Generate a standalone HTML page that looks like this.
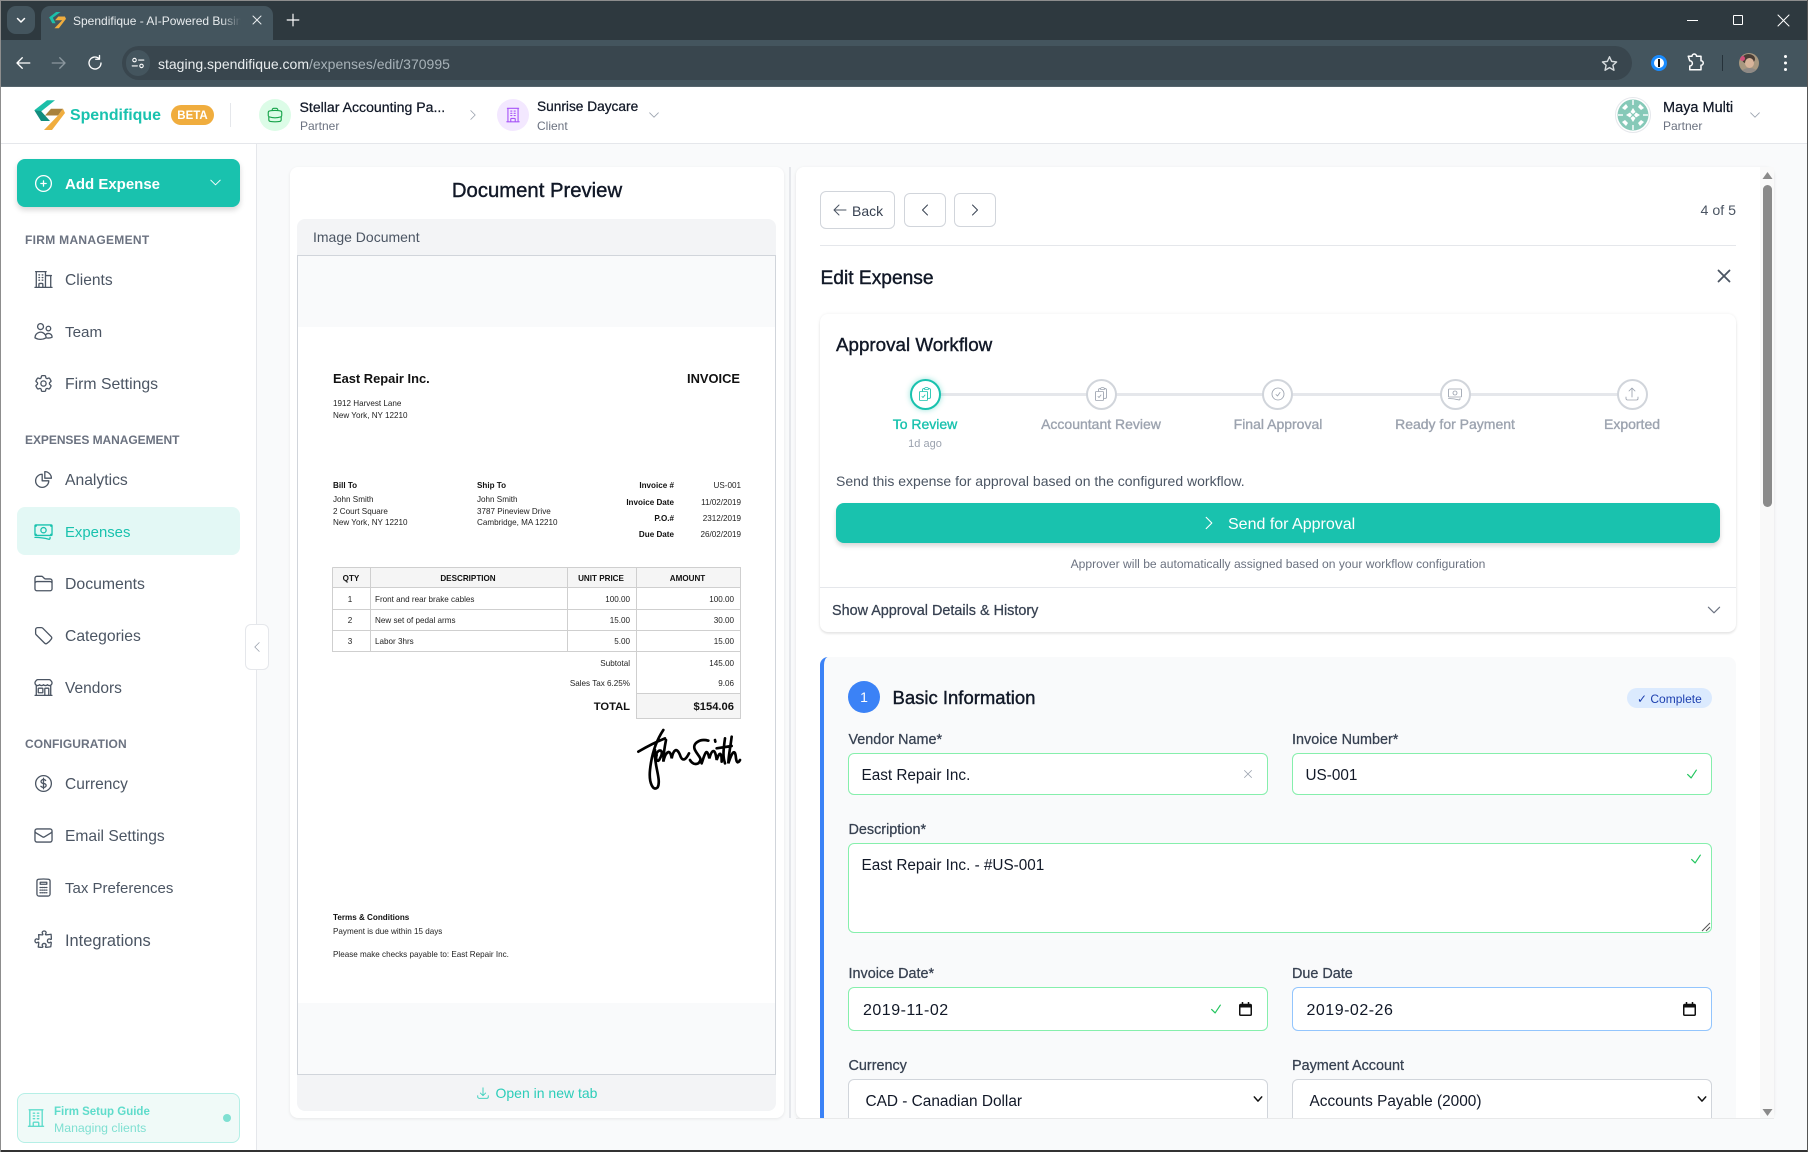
<!DOCTYPE html>
<html lang="en"><head><meta charset="utf-8"><title>Spendifique</title>
<style>
*{box-sizing:border-box}
html,body{margin:0;padding:0;width:1808px;height:1152px;overflow:hidden;background:#f9fafb}
body{font-family:"Liberation Sans",sans-serif;color:#374151;position:relative}
.a{position:absolute}
.t{position:absolute;white-space:nowrap;line-height:0;height:0}
.c{transform:translateX(-50%)}
.m{-webkit-text-stroke:.25px currentColor}
svg{position:absolute;overflow:visible}
svg.i{fill:none;stroke:currentColor;stroke-width:1.5;stroke-linecap:round;stroke-linejoin:round}
.nav{font-size:15.6px;color:#4b5563;left:65px}
.lab{font-size:12px;font-weight:bold;color:#6b7280;left:25px}
.ni{left:32.5px;width:21px;height:21px;color:#4b5563}
.inv{font-size:8.1px;color:#222}
.invb{font-size:8.1px;color:#111;font-weight:bold}
.fl{font-size:14.4px;color:#374151}
.val{font-size:15.3px;color:#111827}
.box{position:absolute;background:#fff;border:1px solid #86efac;border-radius:6px}
.circ{position:absolute;width:31px;height:31px;border-radius:50%;background:#fff;border:2px solid #d1d5db;top:378.5px}
</style></head><body>

<!-- Chrome -->
<div class="a" style="left:0;top:0;width:1808px;height:87px;background:#2e393f;border-top:1px solid #8d8d8d"></div>
<div class="a" style="left:0;top:40px;width:1808px;height:47px;background:#44555e;border-bottom:1px solid #56656d"></div>
<div class="a" style="left:41px;top:6px;width:232px;height:36px;background:#44555e;border-radius:9px 9px 0 0"></div>
<div class="a" style="left:7px;top:6px;width:28px;height:28px;background:#44555e;border-radius:9px"></div>
<svg class="i" style="left:15px;top:14px;color:#fff;stroke-width:3" width="12" height="12" viewBox="0 0 24 24"><path d="M5 9l7 7 7-7"/></svg>
<svg style="left:49px;top:11px" width="17" height="18" viewBox="34 100 31 30"><polygon fill="#1cbfa9" points="34.3,110.3 47,100.3 55,100.3 41,111 46,121 40,121"/><polygon fill="#f0ad3e" points="63,108.7 51,108.7 45,115.5 58,115.5 44,130 52,130 65,113"/></svg>
<div class="t" style="left:73px;top:21px;font-size:12px;color:#e8ecee;width:168px;overflow:hidden;height:16px;margin-top:-8px;line-height:16px;-webkit-mask-image:linear-gradient(90deg,#000 88%,transparent)">Spendifique - AI-Powered Busin</div>
<svg class="i" style="left:251px;top:14px;color:#e8ecee;stroke-width:2" width="12" height="12" viewBox="0 0 24 24"><path d="M4 4l16 16M20 4L4 20"/></svg>
<svg class="i" style="left:286px;top:13px;color:#fff;stroke-width:2" width="14" height="14" viewBox="0 0 24 24"><path d="M12 2v20M2 12h20"/></svg>
<svg class="i" style="left:14px;top:54px;color:#fff;stroke-width:1.8" width="18" height="18" viewBox="0 0 24 24"><path d="M11 5l-7 7 7 7M4 12h17"/></svg>
<svg class="i" style="left:50px;top:54px;color:#8c989f;stroke-width:1.8" width="18" height="18" viewBox="0 0 24 24"><path d="M13 5l7 7-7 7M20 12H3"/></svg>
<svg class="i" style="left:86px;top:54px;color:#fff;stroke-width:1.8" width="18" height="18" viewBox="0 0 24 24"><path d="M20 12a8 8 0 1 1-2.5-5.8M18 2v5h-5"/></svg>
<div class="a" style="left:122px;top:46px;width:1510px;height:34px;background:#39464e;border-radius:17px"></div>
<div class="a" style="left:126px;top:50px;width:24px;height:26px;background:#44555e;border-radius:13px"></div>
<svg class="i" style="left:131px;top:56px;color:#fff;stroke-width:1.8" width="14" height="14" viewBox="0 0 24 24"><circle cx="6" cy="7" r="3"/><path d="M13 7h9M2 17h9"/><circle cx="18" cy="17" r="3"/></svg>
<div class="t" style="left:158px;top:64px;font-size:14px;color:#e9edef">staging.spendifique.com<span style="color:#a7b2b8">/expenses/edit/370995</span></div>
<svg style="left:1601px;top:55px" width="17" height="17" viewBox="0 0 24 24" fill="none" stroke="#d6dbdd" stroke-width="2" stroke-linejoin="round"><path d="M12 2.5l3 6.5 7 .8-5.2 4.7 1.5 7L12 17.8 5.7 21.5l1.5-7L2 9.8l7-.8z"/></svg>
<div class="a" style="left:1651px;top:55px;width:16px;height:16px;border-radius:50%;background:#fff;border:3px solid #1a8cff"></div>
<div class="a" style="left:1658px;top:59px;width:2px;height:8px;background:#111"></div>
<svg class="i" style="left:1686px;top:54px;color:#fff;stroke-width:2" width="18" height="18" viewBox="0 0 24 24"><path d="M3 3h5a3 3 0 0 1 6 0h6v6a3 3 0 0 1 0 6v6H5v-5a3 3 0 0 0 0-7z"/></svg>
<div class="a" style="left:1722px;top:55px;width:1px;height:16px;background:#26323a"></div>
<div class="a" style="left:1739px;top:53px;width:20px;height:20px;border-radius:50%;background:#a89880;overflow:hidden"><div class="a" style="left:3px;top:1px;width:13px;height:10px;border-radius:50%;background:#4a3d35"></div><div class="a" style="left:6px;top:5px;width:9px;height:10px;border-radius:50%;background:#d8b49a"></div><div class="a" style="left:3px;top:15px;width:15px;height:8px;border-radius:50%;background:#8f8a86"></div><div class="a" style="left:1px;top:3px;width:5px;height:5px;border-radius:50%;background:#d0507a"></div></div>
<div class="a" style="left:1784px;top:55px;width:3px;height:3px;border-radius:50%;background:#fff;box-shadow:0 6.5px 0 #fff,0 13px 0 #fff"></div>
<div class="a" style="left:1687px;top:19.5px;width:11px;height:1px;background:#fff"></div>
<div class="a" style="left:1733px;top:15px;width:10px;height:10px;border:1px solid #fff;border-radius:1px"></div>
<svg class="i" style="left:1778px;top:15px;color:#fff;stroke-width:1" width="11" height="11" viewBox="0 0 11 11"><path d="M0 0l11 11M11 0L0 11"/></svg>

<!-- Header -->
<div class="a" style="left:0;top:87px;width:1808px;height:57px;background:#fff;border-bottom:1px solid #e5e7eb"></div>
<svg style="left:34px;top:100px" width="31" height="30" viewBox="34 100 31 30"><polygon fill="#1cbfa9" points="34.3,110.3 47,100.3 55,100.3 41,111.500"/><polygon fill="#128d7e" points="34.3,110.3 41,111 50,121 41,121"/><polygon fill="#1cbfa9" points="43,110 50,115 47,118 39,110.500" opacity="0"/><polygon fill="#a9813c" points="63,108.7 51,108.7 45,115.5 58,115.5"/><polygon fill="#f0ad3e" points="63,108.7 65,113 52,130 44,130 58,115.5"/></svg>
<div class="t" style="left:70px;top:116px;font-size:15.9px;font-weight:bold;color:#19c2ae">Spendifique</div>
<div class="a" style="left:171px;top:105px;width:43px;height:20px;border-radius:10px;background:#f0ad3e"></div>
<div class="t c" style="left:192.5px;top:115.5px;font-size:11.5px;font-weight:bold;color:#fff">BETA</div>
<div class="a" style="left:230px;top:103px;width:1px;height:24px;background:#e5e7eb"></div>
<div class="a" style="left:259px;top:99px;width:32px;height:32px;border-radius:50%;background:#dcfce7"></div>
<svg class="i" style="left:266px;top:106px;color:#16a34a" width="18" height="18" viewBox="0 0 24 24"><path d="M20.25 14.15v4.25c0 1.094-.787 2.036-1.872 2.18-2.087.277-4.216.42-6.378.42s-4.291-.143-6.378-.42c-1.085-.144-1.872-1.086-1.872-2.18v-4.25m16.5 0a2.18 2.18 0 00.75-1.661V8.706c0-1.081-.768-2.015-1.837-2.175a48.114 48.114 0 00-3.413-.387m4.5 8.006c-.194.165-.42.295-.673.38A23.978 23.978 0 0112 15.75c-2.648 0-5.195-.429-7.577-1.22a2.016 2.016 0 01-.673-.38m0 0A2.18 2.18 0 013 12.489V8.706c0-1.081.768-2.015 1.837-2.175a48.111 48.111 0 013.413-.387m7.5 0V5.25A2.25 2.25 0 0013.5 3h-3a2.25 2.25 0 00-2.25 2.25v.894m7.5 0a48.667 48.667 0 00-7.5 0"/></svg>
<div class="t m" style="left:299.5px;top:107px;font-size:14.1px;color:#111827">Stellar Accounting Pa...</div>
<div class="t" style="left:300px;top:126px;font-size:12px;color:#6b7280">Partner</div>
<svg class="i" style="left:466px;top:108px;color:#9ca3af" width="14" height="14" viewBox="0 0 24 24"><path d="M8.25 4.5l7.5 7.5-7.5 7.5"/></svg>
<div class="a" style="left:497px;top:99px;width:32px;height:32px;border-radius:50%;background:#f3e8ff"></div>
<svg class="i" style="left:504px;top:106px;color:#a855f7" width="18" height="18" viewBox="0 0 24 24"><path d="M3.75 21h16.5M4.5 3h15M5.25 3v18m13.5-18v18M9 6.75h1.5m-1.5 3h1.5m-1.5 3h1.5m3-6H15m-1.5 3H15m-1.5 3H15M9 21v-3.375c0-.621.504-1.125 1.125-1.125h3.75c.621 0 1.125.504 1.125 1.125V21"/></svg>
<div class="t m" style="left:537px;top:107px;font-size:13.7px;color:#111827">Sunrise Daycare</div>
<div class="t" style="left:537px;top:126px;font-size:12px;color:#6b7280">Client</div>
<svg class="i" style="left:647px;top:108px;color:#9ca3af" width="14" height="14" viewBox="0 0 24 24"><path d="M19.5 8.25l-7.5 7.5-7.5-7.5"/></svg>
<div class="a" style="left:1615px;top:97px;width:36px;height:36px;border-radius:50%;background:#fff;border:1.5px solid #e5e7eb"></div>
<svg style="left:1617px;top:99px" width="32" height="32" viewBox="0 0 32 32" fill="#86c9b8"><circle cx="16" cy="16" r="15.5"/><g fill="#fff"><polygon points="16,9 18.5,13 16,15 13.5,13"/><polygon points="16,17 18.5,19 16,23 13.5,19"/><polygon points="9,16 13,13.5 15,16 13,18.5"/><polygon points="17,16 19,13.5 23,16 19,18.5"/><polygon points="5,9 9,5 11,8 8,11"/><polygon points="27,9 23,5 21,8 24,11"/><polygon points="5,23 9,27 11,24 8,21"/><polygon points="27,23 23,27 21,24 24,21"/><rect x="15.3" y="1" width="1.4" height="5"/><rect x="15.3" y="26" width="1.4" height="5"/><rect x="1" y="15.3" width="5" height="1.4"/><rect x="26" y="15.3" width="5" height="1.4"/></g></svg>
<div class="t m" style="left:1663px;top:108px;font-size:14.5px;color:#111827">Maya Multi</div>
<div class="t" style="left:1663px;top:126px;font-size:12px;color:#6b7280">Partner</div>
<svg class="i" style="left:1748px;top:108px;color:#9ca3af" width="14" height="14" viewBox="0 0 24 24"><path d="M19.5 8.25l-7.5 7.5-7.5-7.5"/></svg>

<!-- Sidebar -->
<div class="a" style="left:0;top:144px;width:257px;height:1008px;background:#fff;border-right:1px solid #e5e7eb"></div>
<div class="a" style="left:17px;top:159px;width:223px;height:48px;background:#19c2ae;border-radius:8px;box-shadow:0 3px 6px rgba(0,0,0,.16)"></div>
<svg class="i" style="left:32.5px;top:172.5px;color:#fff" width="21" height="21" viewBox="0 0 24 24"><path d="M12 9v6m3-3H9m12 0a9 9 0 11-18 0 9 9 0 0118 0z"/></svg>
<div class="t" style="left:65px;top:184.5px;font-size:15px;font-weight:bold;color:#fff">Add Expense</div>
<svg class="i" style="left:208px;top:175px;color:#fff" width="15" height="15" viewBox="0 0 24 24"><path d="M19.5 8.25l-7.5 7.5-7.5-7.5"/></svg>

<div class="t lab" style="top:240px;letter-spacing:.3px">FIRM MANAGEMENT</div>
<svg class="i ni" style="top:268.5px" viewBox="0 0 24 24"><path d="M2.25 21h19.5m-18-18v18m10.5-18v18m6-13.5V21M6.75 6.75h.75m-.75 3h.75m-.75 3h.75m3-6h.75m-.75 3h.75m-.75 3h.75M6.75 21v-3.375c0-.621.504-1.125 1.125-1.125h2.25c.621 0 1.125.504 1.125 1.125V21M3 3h12m-.75 4.5H21"/></svg>
<div class="t nav" style="top:281px;font-size:15.6px">Clients</div>
<svg class="i ni" style="top:320.5px" viewBox="0 0 24 24"><path d="M15 19.128a9.38 9.38 0 002.625.372 9.337 9.337 0 004.121-.952 4.125 4.125 0 00-7.533-2.493M15 19.128v-.003c0-1.113-.285-2.16-.786-3.07M15 19.128v.106A12.318 12.318 0 018.624 21c-2.331 0-4.512-.645-6.374-1.766l-.001-.109a6.375 6.375 0 0111.964-3.07M12 6.375a3.375 3.375 0 11-6.75 0 3.375 3.375 0 016.75 0zm8.25 2.25a2.625 2.625 0 11-5.25 0 2.625 2.625 0 015.25 0z"/></svg>
<div class="t nav" style="top:332.5px;font-size:15.2px">Team</div>
<svg class="i ni" style="top:372.5px" viewBox="0 0 24 24"><path d="M9.594 3.94c.09-.542.56-.94 1.11-.94h2.593c.55 0 1.02.398 1.11.94l.213 1.281c.063.374.313.686.645.87.074.04.147.083.22.127.324.196.72.257 1.075.124l1.217-.456a1.125 1.125 0 011.37.49l1.296 2.247a1.125 1.125 0 01-.26 1.431l-1.003.827c-.293.24-.438.613-.431.992a6.759 6.759 0 010 .255c-.007.378.138.75.43.99l1.005.828c.424.35.534.954.26 1.43l-1.298 2.247a1.125 1.125 0 01-1.369.491l-1.217-.456c-.355-.133-.75-.072-1.076.124a6.57 6.57 0 01-.22.128c-.331.183-.581.495-.644.869l-.213 1.28c-.09.543-.56.941-1.11.941h-2.594c-.55 0-1.02-.398-1.11-.94l-.213-1.281c-.062-.374-.312-.686-.644-.87a6.52 6.52 0 01-.22-.127c-.325-.196-.72-.257-1.076-.124l-1.217.456a1.125 1.125 0 01-1.369-.49l-1.297-2.247a1.125 1.125 0 01.26-1.431l1.004-.827c.292-.24.437-.613.43-.992a6.932 6.932 0 010-.255c.007-.378-.138-.75-.43-.99l-1.004-.828a1.125 1.125 0 01-.26-1.43l1.297-2.247a1.125 1.125 0 011.37-.491l1.216.456c.356.133.751.072 1.076-.124.072-.044.146-.087.22-.128.332-.183.582-.495.644-.869l.214-1.281z"/><path d="M15 12a3 3 0 11-6 0 3 3 0 016 0z"/></svg>
<div class="t nav" style="top:385px;font-size:15.8px">Firm Settings</div>

<div class="t lab" style="top:439.5px;letter-spacing:-.05px">EXPENSES MANAGEMENT</div>
<svg class="i ni" style="top:468.5px" viewBox="0 0 24 24"><path d="M10.5 6a7.5 7.5 0 107.5 7.5h-7.5V6z"/><path d="M13.5 10.5H21A7.5 7.5 0 0013.5 3v7.5z"/></svg>
<div class="t nav" style="top:481px;font-size:15.7px">Analytics</div>
<div class="a" style="left:17px;top:507px;width:223px;height:48px;background:#e3f8f5;border-radius:8px"></div>
<svg class="i ni" style="top:520.5px;color:#19c2ae" viewBox="0 0 24 24"><path d="M2.25 18.75a60.07 60.07 0 0115.797 2.101c.727.198 1.453-.342 1.453-1.096V18.75M3.75 4.5v.75A.75.75 0 013 6h-.75m0 0v-.375c0-.621.504-1.125 1.125-1.125H20.25M2.25 6v9m18-10.5v.75c0 .414.336.75.75.75h.75m-1.5-1.5h.375c.621 0 1.125.504 1.125 1.125v9.75c0 .621-.504 1.125-1.125 1.125h-.375m1.5-1.5H21a.75.75 0 00-.75.75v.75m0 0H3.75m0 0h-.375a1.125 1.125 0 01-1.125-1.125V15m1.5 1.5v-.75A.75.75 0 003 15h-.75M15 10.5a3 3 0 11-6 0 3 3 0 016 0z"/></svg>
<div class="t nav" style="top:533px;color:#19c2ae;font-size:14.9px">Expenses</div>
<svg class="i ni" style="top:572.5px" viewBox="0 0 24 24"><path d="M2.25 12.75V12A2.25 2.25 0 014.5 9.75h15A2.25 2.25 0 0121.75 12v.75m-8.69-6.44l-2.12-2.12a1.5 1.5 0 00-1.061-.44H4.5A2.25 2.25 0 002.25 6v12a2.25 2.25 0 002.25 2.25h15A2.25 2.25 0 0021.75 18V9a2.25 2.25 0 00-2.25-2.25h-5.379a1.5 1.5 0 01-1.06-.44z"/></svg>
<div class="t nav" style="top:585px;font-size:15.8px">Documents</div>
<svg class="i ni" style="top:625px" viewBox="0 0 24 24"><path d="M9.568 3H5.25A2.25 2.25 0 003 5.25v4.318c0 .597.237 1.17.659 1.591l9.581 9.581c.699.699 1.78.872 2.607.33a18.095 18.095 0 005.223-5.223c.542-.827.369-1.908-.33-2.607L11.16 3.66A2.25 2.25 0 009.568 3z"/></svg>
<div class="t nav" style="top:637px;font-size:15.7px">Categories</div>
<svg class="i ni" style="top:677px" viewBox="0 0 24 24"><path d="M13.5 21v-7.5a.75.75 0 01.75-.75h3a.75.75 0 01.75.75V21m-4.5 0H2.36m11.14 0H18m0 0h3.64m-1.39 0V9.349m-16.5 11.65V9.35m0 0a3.001 3.001 0 003.75-.615A2.993 2.993 0 009.75 9.75c.896 0 1.7-.393 2.25-1.016a2.993 2.993 0 002.25 1.016c.896 0 1.7-.393 2.25-1.016a3.001 3.001 0 003.75.614m-16.5 0a3.004 3.004 0 01-.621-4.72L4.318 3.44A1.5 1.5 0 015.378 3h13.243a1.5 1.5 0 011.06.44l1.19 1.189a3 3 0 01-.621 4.72m-13.5 8.65h3.75a.75.75 0 00.75-.75V13.5a.75.75 0 00-.75-.75H6.75a.75.75 0 00-.75.75v3.75c0 .415.336.75.75.75z"/></svg>
<div class="t nav" style="top:689px;font-size:15.5px">Vendors</div>

<div class="t lab" style="top:743.5px;letter-spacing:.1px">CONFIGURATION</div>
<svg class="i ni" style="top:773px" viewBox="0 0 24 24"><path d="M12 6v12m-3-2.818l.879.659c1.171.879 3.07.879 4.242 0 1.172-.879 1.172-2.303 0-3.182C13.536 12.219 12.768 12 12 12c-.725 0-1.45-.22-2.003-.659-1.106-.879-1.106-2.303 0-3.182s2.9-.879 4.006 0l.415.33M21 12a9 9 0 11-18 0 9 9 0 0118 0z"/></svg>
<div class="t nav" style="top:785px;font-size:15.5px">Currency</div>
<svg class="i ni" style="top:824.5px" viewBox="0 0 24 24"><path d="M21.75 6.75v10.5a2.25 2.25 0 01-2.25 2.25h-15a2.25 2.25 0 01-2.25-2.25V6.75m19.5 0A2.25 2.25 0 0019.5 4.5h-15a2.25 2.25 0 00-2.25 2.25m19.5 0v.243a2.25 2.25 0 01-1.07 1.916l-7.5 4.615a2.25 2.25 0 01-2.36 0L3.32 8.91a2.25 2.25 0 01-1.07-1.916V6.75"/></svg>
<div class="t nav" style="top:837px;font-size:15.6px">Email Settings</div>
<svg class="i ni" style="top:876.5px" viewBox="0 0 24 24"><path d="M8.25 6h7.5v2.25h-7.5V6zM12 2.25c-1.892 0-3.758.11-5.593.322C5.307 2.7 4.5 3.65 4.5 4.757V19.5a2.25 2.25 0 002.25 2.25h10.5a2.25 2.25 0 002.25-2.25V4.757c0-1.108-.806-2.057-1.907-2.185A48.507 48.507 0 0012 2.25z"/><path stroke-dasharray="1 1.3" d="M8 12h8M8 15h8M8 18h8"/></svg>
<div class="t nav" style="top:888.5px;font-size:15px">Tax Preferences</div>
<svg class="i ni" style="top:928.5px" viewBox="0 0 24 24"><path d="M14.25 6.087c0-.355.186-.676.401-.959.221-.29.349-.634.349-1.003 0-1.036-1.007-1.875-2.25-1.875s-2.25.84-2.25 1.875c0 .369.128.713.349 1.003.215.283.401.604.401.959a.64.64 0 01-.657.643 48.39 48.39 0 01-4.163-.3c.186 1.613.293 3.25.315 4.907a.656.656 0 01-.658.663c-.355 0-.676-.186-.959-.401a1.647 1.647 0 00-1.003-.349c-1.036 0-1.875 1.007-1.875 2.25s.84 2.25 1.875 2.25c.369 0 .713-.128 1.003-.349.283-.215.604-.401.959-.401.31 0 .555.26.532.57a48.039 48.039 0 01-.642 5.056c1.518.19 3.058.309 4.616.354a.64.64 0 00.657-.643c0-.355-.186-.676-.401-.959a1.647 1.647 0 01-.349-1.003c0-1.035 1.008-1.875 2.25-1.875 1.243 0 2.25.84 2.25 1.875 0 .369-.128.713-.349 1.003-.215.283-.4.604-.4.959 0 .333.277.599.61.58a48.1 48.1 0 005.427-.63 48.05 48.05 0 00.582-4.717.532.532 0 00-.533-.57c-.355 0-.676.186-.959.401-.29.221-.634.349-1.003.349-1.035 0-1.875-1.007-1.875-2.25s.84-2.25 1.875-2.25c.37 0 .713.128 1.003.349.283.215.604.401.96.401a.656.656 0 00.658-.663 48.422 48.422 0 00-.37-5.36c-1.886.342-3.81.574-5.766.689a.578.578 0 01-.61-.58z"/></svg>
<div class="t nav" style="top:940.5px;font-size:16.4px">Integrations</div>

<div class="a" style="left:17px;top:1093px;width:223px;height:50px;background:#f0faf8;border:1px solid #b5efe6;border-radius:8px"></div>
<svg class="i" style="left:25px;top:1107px;color:#5fdccb" width="22" height="22" viewBox="0 0 24 24"><path d="M3.75 21h16.5M4.5 3h15M5.25 3v18m13.5-18v18M9 6.75h1.5m-1.5 3h1.5m-1.5 3h1.5m3-6H15m-1.5 3H15m-1.5 3H15M9 21v-3.375c0-.621.504-1.125 1.125-1.125h3.75c.621 0 1.125.504 1.125 1.125V21"/></svg>
<div class="t" style="left:54px;top:1112px;font-size:11.5px;font-weight:bold;color:#5fdccb">Firm Setup Guide</div>
<div class="t" style="left:54px;top:1127.5px;font-size:12.3px;color:#7fe0d2">Managing clients</div>
<div class="a" style="left:223px;top:1114px;width:8px;height:8px;border-radius:50%;background:#7fe0d2"></div>

<div class="a" style="left:245px;top:624px;width:24px;height:46px;background:#fff;border:1px solid #e5e7eb;border-radius:6px"></div>
<svg class="i" style="left:250px;top:640px;color:#9ca3af" width="14" height="14" viewBox="0 0 24 24"><path d="M15.75 19.5L8.25 12l7.5-7.5"/></svg>

<!-- Document panel -->
<div class="a" style="left:290px;top:167px;width:494px;height:951px;background:#fff;border-radius:8px;box-shadow:0 1px 3px rgba(0,0,0,.08)"></div>
<div class="t c" style="left:537px;top:191px;font-size:20.3px;color:#111827;-webkit-text-stroke:.4px #111827">Document Preview</div>
<div class="a" style="left:297px;top:219px;width:479px;height:37px;background:#f3f4f6;border-radius:8px 8px 0 0"></div>
<div class="t" style="left:313px;top:237px;font-size:14px;color:#4b5563">Image Document</div>
<div class="a" style="left:297px;top:255px;width:479px;height:820px;background:#f9fafb;border:1px solid #d1d5db"></div>
<div class="a" style="left:298px;top:327px;width:477px;height:676px;background:#fff"></div>
<div class="a" style="left:297px;top:1075px;width:479px;height:36px;background:#f3f4f6;border-radius:0 0 8px 8px"></div>
<svg class="i" style="left:476px;top:1086px;color:#2ccdb9" width="14" height="14" viewBox="0 0 24 24"><path d="M3 16.5v2.25A2.25 2.25 0 005.25 21h13.5A2.25 2.25 0 0021 18.75V16.5M16.5 12L12 16.5m0 0L7.5 12m4.5 4.5V3"/></svg>
<div class="t" style="left:495.5px;top:1093px;font-size:14px;color:#2ccdb9">Open in new tab</div>
<div class="a" style="left:789px;top:167px;width:1.5px;height:951px;background:#e5e7eb"></div>

<!-- Invoice -->
<div class="t" style="left:333px;top:379px;font-size:12.9px;font-weight:bold;color:#111">East Repair Inc.</div>
<div class="t" style="right:1068px;top:379px;font-size:12.9px;font-weight:bold;color:#111">INVOICE</div>
<div class="t inv" style="left:333px;top:404px">1912 Harvest Lane</div>
<div class="t inv" style="left:333px;top:416px">New York, NY 12210</div>
<div class="t invb" style="left:333px;top:486px">Bill To</div>
<div class="t inv" style="left:333px;top:500px">John Smith</div>
<div class="t inv" style="left:333px;top:511.5px">2 Court Square</div>
<div class="t inv" style="left:333px;top:523px">New York, NY 12210</div>
<div class="t invb" style="left:477px;top:486px">Ship To</div>
<div class="t inv" style="left:477px;top:500px">John Smith</div>
<div class="t inv" style="left:477px;top:511.5px">3787 Pineview Drive</div>
<div class="t inv" style="left:477px;top:523px">Cambridge, MA 12210</div>
<div class="t invb" style="right:1134px;top:486px">Invoice #</div>
<div class="t invb" style="right:1134px;top:502.5px">Invoice Date</div>
<div class="t invb" style="right:1134px;top:518.5px">P.O.#</div>
<div class="t invb" style="right:1134px;top:535px">Due Date</div>
<div class="t inv" style="right:1067px;top:486px">US-001</div>
<div class="t inv" style="right:1067px;top:502.5px">11/02/2019</div>
<div class="t inv" style="right:1067px;top:518.5px">2312/2019</div>
<div class="t inv" style="right:1067px;top:535px">26/02/2019</div>

<div class="a" style="left:332px;top:567px;width:409px;height:20px;background:#f5f5f5"></div>
<div class="a" style="left:636px;top:693px;width:105px;height:26px;background:#f5f5f5"></div>
<svg style="left:0;top:0" width="1808" height="1152" fill="none" stroke="#cfcfcf" stroke-width="1"><path d="M332.5 567.5H740.5V718.5H636.5V651.5M332.5 567.5V651.5H740.5M332.5 587.5H740.5M332.5 609.5H740.5M332.5 630.5H740.5M370.5 567.5V651.5M567.5 567.5V651.5M636.5 567.5V651.5M636.5 693.5H740.5"/></svg>
<div class="t invb c" style="left:351px;top:579px">QTY</div>
<div class="t invb c" style="left:468px;top:579px">DESCRIPTION</div>
<div class="t invb c" style="left:601px;top:579px">UNIT PRICE</div>
<div class="t invb c" style="left:687.5px;top:579px">AMOUNT</div>
<div class="t inv c" style="left:350px;top:600px">1</div>
<div class="t inv c" style="left:350px;top:621px">2</div>
<div class="t inv c" style="left:350px;top:642px">3</div>
<div class="t inv" style="left:375px;top:600px">Front and rear brake cables</div>
<div class="t inv" style="left:375px;top:621px">New set of pedal arms</div>
<div class="t inv" style="left:375px;top:642px">Labor 3hrs</div>
<div class="t inv" style="right:1178px;top:600px">100.00</div>
<div class="t inv" style="right:1178px;top:621px">15.00</div>
<div class="t inv" style="right:1178px;top:642px">5.00</div>
<div class="t inv" style="right:1178px;top:663.5px">Subtotal</div>
<div class="t inv" style="right:1178px;top:684px">Sales Tax 6.25%</div>
<div class="t" style="right:1178px;top:706.5px;font-size:11.2px;font-weight:bold;color:#111">TOTAL</div>
<div class="t inv" style="right:1074px;top:600px">100.00</div>
<div class="t inv" style="right:1074px;top:621px">30.00</div>
<div class="t inv" style="right:1074px;top:642px">15.00</div>
<div class="t inv" style="right:1074px;top:663.5px">145.00</div>
<div class="t inv" style="right:1074px;top:684px">9.06</div>
<div class="t" style="right:1074px;top:706.5px;font-size:11.2px;font-weight:bold;color:#111">$154.06</div>
<svg style="left:290px;top:550px" width="500" height="300" viewBox="0 0 1500 900" fill="none" stroke="#000" stroke-width="8" stroke-linecap="round"><path d="M1045 605C1070 590 1100 575 1125 565M1120 540C1100 570 1085 610 1080 660C1076 700 1090 725 1103 712C1115 690 1090 640 1095 600M1095 620C1105 590 1125 600 1110 625C1105 640 1095 630 1100 615M1128 570C1122 600 1120 620 1120 635C1125 610 1140 590 1145 625C1150 600 1160 590 1170 615C1178 640 1190 625 1197 610M1255 572C1230 565 1205 580 1215 600C1225 620 1240 625 1225 640C1215 645 1205 640 1200 630M1235 640C1245 610 1250 590 1258 625C1265 600 1275 590 1280 630C1290 600 1295 610 1295 635M1305 565C1300 600 1298 620 1305 640M1280 595L1325 588M1325 560C1320 600 1315 620 1315 640C1325 610 1335 590 1338 625C1340 640 1345 640 1350 630M1275 570L1276 575"/></svg>
<div class="t invb" style="left:333px;top:918px">Terms &amp; Conditions</div>
<div class="t inv" style="left:333px;top:932px">Payment is due within 15 days</div>
<div class="t inv" style="left:333px;top:955px">Please make checks payable to: East Repair Inc.</div>

<!-- Right panel -->
<div class="a" style="left:796px;top:167px;width:978px;height:952px;background:#fff;border-radius:8px;box-shadow:0 1px 3px rgba(0,0,0,.1)"></div>
<div class="a" style="left:1760px;top:167px;width:14px;height:952px;background:#f9f9f9"></div>
<div class="a" style="left:820px;top:191px;width:75px;height:38px;background:#fff;border:1px solid #d1d5db;border-radius:6px"></div>
<svg class="i" style="left:832px;top:202px;color:#4b5563" width="16" height="16" viewBox="0 0 24 24"><path d="M10.5 19.5L3 12m0 0l7.5-7.5M3 12h18"/></svg>
<div class="t" style="left:852px;top:210.5px;font-size:14px;color:#374151">Back</div>
<div class="a" style="left:904px;top:193px;width:42px;height:34px;background:#fff;border:1px solid #d1d5db;border-radius:6px"></div>
<svg class="i" style="left:917px;top:202px;color:#374151" width="16" height="16" viewBox="0 0 24 24"><path d="M15.75 19.5L8.25 12l7.5-7.5"/></svg>
<div class="a" style="left:954px;top:193px;width:42px;height:34px;background:#fff;border:1px solid #d1d5db;border-radius:6px"></div>
<svg class="i" style="left:967px;top:202px;color:#374151" width="16" height="16" viewBox="0 0 24 24"><path d="M8.25 4.5l7.5 7.5-7.5 7.5"/></svg>
<div class="t" style="right:72px;top:210.5px;font-size:14.2px;color:#4b5563">4 of 5</div>
<div class="a" style="left:820px;top:245px;width:916px;height:1px;background:#e5e7eb"></div>
<div class="t" style="left:820.5px;top:279px;font-size:19.2px;color:#111827;-webkit-text-stroke:.4px #111827">Edit Expense</div>
<svg class="i" style="left:1713px;top:265px;color:#4b5563;stroke-width:2" width="22" height="22" viewBox="0 0 24 24"><path d="M6 18L18 6M6 6l12 12"/></svg>

<div class="a" style="left:820px;top:314px;width:916px;height:318px;background:#fff;border-radius:8px;box-shadow:0 0 3px rgba(0,0,0,.07),0 2px 2px rgba(0,0,0,.08)"></div>
<div class="t" style="left:836px;top:345px;font-size:18.8px;color:#111827;-webkit-text-stroke:.4px #111827">Approval Workflow</div>
<div class="a" style="left:925px;top:393px;width:707px;height:3px;background:#e5e7eb"></div>
<div class="circ" style="left:909.5px;border-color:#19c2ae;box-shadow:0 0 6px rgba(25,194,174,.45)"></div>
<div class="circ" style="left:1085.5px"></div>
<div class="circ" style="left:1262px"></div>
<div class="circ" style="left:1439.5px"></div>
<div class="circ" style="left:1616.5px"></div>
<svg class="i" style="left:917px;top:386px;color:#19c2ae;stroke-width:1.3" width="16" height="16" viewBox="0 0 24 24"><path d="M11.35 3.836c-.065.21-.1.433-.1.664 0 .414.336.75.75.75h4.5a.75.75 0 00.75-.75 2.25 2.25 0 00-.1-.664m-5.8 0A2.251 2.251 0 0113.5 2.25H15c1.012 0 1.867.668 2.15 1.586m-5.8 0c-.376.023-.75.05-1.124.08C9.095 4.01 8.25 4.973 8.25 6.108V8.25m8.9-4.414c.376.023.75.05 1.124.08 1.131.094 1.976 1.057 1.976 2.192V16.5A2.25 2.25 0 0118 18.75h-2.25m-7.5-10.5H4.875c-.621 0-1.125.504-1.125 1.125v11.25c0 .621.504 1.125 1.125 1.125h9.75c.621 0 1.125-.504 1.125-1.125V18.75m-7.5-10.5h6.375c.621 0 1.125.504 1.125 1.125v9.375m-8.25-3l1.5 1.5 3-3.75"/></svg>
<svg class="i" style="left:1093px;top:386px;color:#9ca3af;stroke-width:1.3" width="16" height="16" viewBox="0 0 24 24"><path d="M11.35 3.836c-.065.21-.1.433-.1.664 0 .414.336.75.75.75h4.5a.75.75 0 00.75-.75 2.25 2.25 0 00-.1-.664m-5.8 0A2.251 2.251 0 0113.5 2.25H15c1.012 0 1.867.668 2.15 1.586m-5.8 0c-.376.023-.75.05-1.124.08C9.095 4.01 8.25 4.973 8.25 6.108V8.25m8.9-4.414c.376.023.75.05 1.124.08 1.131.094 1.976 1.057 1.976 2.192V16.5A2.25 2.25 0 0118 18.75h-2.25m-7.5-10.5H4.875c-.621 0-1.125.504-1.125 1.125v11.25c0 .621.504 1.125 1.125 1.125h9.75c.621 0 1.125-.504 1.125-1.125V18.75m-7.5-10.5h6.375c.621 0 1.125.504 1.125 1.125v9.375m-8.25-3l1.5 1.5 3-3.75"/></svg>
<svg class="i" style="left:1269.5px;top:386px;color:#9ca3af;stroke-width:1.3" width="16" height="16" viewBox="0 0 24 24"><path d="M9 12.75L11.25 15 15 9.75M21 12a9 9 0 11-18 0 9 9 0 0118 0z"/></svg>
<svg class="i" style="left:1447px;top:386px;color:#9ca3af;stroke-width:1.3" width="16" height="16" viewBox="0 0 24 24"><path d="M2.25 18.75a60.07 60.07 0 0115.797 2.101c.727.198 1.453-.342 1.453-1.096V18.75M2.25 6v9M3.375 4.5h17.25c.621 0 1.125.504 1.125 1.125v9.75c0 .621-.504 1.125-1.125 1.125H3.375A1.125 1.125 0 012.25 15.375V5.625C2.25 5.004 2.754 4.5 3.375 4.5zM15 10.5a3 3 0 11-6 0 3 3 0 016 0z"/></svg>
<svg class="i" style="left:1624px;top:386px;color:#9ca3af;stroke-width:1.3" width="16" height="16" viewBox="0 0 24 24"><path d="M3 16.5v2.25A2.25 2.25 0 005.25 21h13.5A2.25 2.25 0 0021 18.75V16.5m-13.5-9L12 3m0 0l4.5 4.5M12 3v13.5"/></svg>
<div class="t c" style="left:925px;top:424px;font-size:14px;color:#19c2ae;-webkit-text-stroke:.35px #19c2ae">To Review</div>
<div class="t c" style="left:1101px;top:424px;font-size:14px;color:#9ca3af;-webkit-text-stroke:.35px #9ca3af">Accountant Review</div>
<div class="t c" style="left:1278px;top:424px;font-size:14px;color:#9ca3af;-webkit-text-stroke:.35px #9ca3af">Final Approval</div>
<div class="t c" style="left:1455px;top:424px;font-size:14px;color:#9ca3af;-webkit-text-stroke:.35px #9ca3af">Ready for Payment</div>
<div class="t c" style="left:1632px;top:424px;font-size:14px;color:#9ca3af;-webkit-text-stroke:.35px #9ca3af">Exported</div>
<div class="t c" style="left:925px;top:444px;font-size:11px;color:#9ca3af">1d ago</div>
<div class="t" style="left:836px;top:481px;font-size:14px;color:#4b5563">Send this expense for approval based on the configured workflow.</div>
<div class="a" style="left:836px;top:503px;width:884px;height:40px;background:#19c2ae;border-radius:8px;box-shadow:0 3px 5px rgba(0,0,0,.16)"></div>
<svg class="i" style="left:1200px;top:514px;color:#fff" width="18" height="18" viewBox="0 0 24 24"><path d="M8.25 4.5l7.5 7.5-7.5 7.5"/></svg>
<div class="t" style="left:1228px;top:524.5px;font-size:16px;color:#fff">Send for Approval</div>
<div class="t c" style="left:1278px;top:564px;font-size:12.1px;color:#6b7280">Approver will be automatically assigned based on your workflow configuration</div>
<div class="a" style="left:820px;top:587px;width:916px;height:1px;background:#e5e7eb"></div>
<div class="t m" style="left:832px;top:611px;font-size:14.4px;color:#374151">Show Approval Details &amp; History</div>
<svg class="i" style="left:1705px;top:601px;color:#6b7280" width="18" height="18" viewBox="0 0 24 24"><path d="M19.5 8.25l-7.5 7.5-7.5-7.5"/></svg>

<!-- Basic info -->
<div class="a" style="left:820px;top:657px;width:916px;height:480px;background:#f9fafb;border-left:4px solid #3b82f6;border-radius:8px 8px 0 0"></div>
<div class="a" style="left:848px;top:681px;width:32px;height:32px;border-radius:50%;background:#3b82f6"></div>
<div class="t c" style="left:864px;top:697px;font-size:14px;color:#fff">1</div>
<div class="t" style="left:892.5px;top:698px;font-size:18.5px;color:#111827;-webkit-text-stroke:.4px #111827">Basic Information</div>
<div class="a" style="left:1627px;top:688px;width:85px;height:20px;border-radius:10px;background:#dbeafe"></div>
<div class="t" style="left:1637px;top:698.5px;font-size:12px;color:#1e40af">✓ Complete</div>

<div class="t fl m" style="left:848.5px;top:740px">Vendor Name*</div>
<div class="t fl m" style="left:1292px;top:740px">Invoice Number*</div>
<div class="box" style="left:848px;top:753px;width:420px;height:42px"></div>
<div class="box" style="left:1292px;top:753px;width:420px;height:42px"></div>
<div class="t val" style="left:861.5px;top:775.5px">East Repair Inc.</div>
<svg class="i" style="left:1241px;top:767px;color:#9ca3af" width="14" height="14" viewBox="0 0 24 24"><path d="M6 18L18 6M6 6l12 12"/></svg>
<div class="t val" style="left:1305.5px;top:775.5px">US-001</div>
<svg class="i" style="left:1685px;top:767px;color:#22c55e;stroke-width:2" width="14" height="14" viewBox="0 0 24 24"><path d="M4.5 12.75l6 6 9-13.5"/></svg>

<div class="t fl m" style="left:848.5px;top:830px">Description*</div>
<div class="box" style="left:848px;top:843px;width:864px;height:90px"></div>
<div class="t val" style="left:861.5px;top:866px">East Repair Inc. - #US-001</div>
<svg class="i" style="left:1689px;top:852px;color:#22c55e;stroke-width:2" width="14" height="14" viewBox="0 0 24 24"><path d="M4.5 12.75l6 6 9-13.5"/></svg>
<svg style="left:1701px;top:922px" width="10" height="10" fill="none" stroke="#555" stroke-width="1"><path d="M1 9L9 1M5 9l4-4"/></svg>

<div class="t fl m" style="left:848.5px;top:974px">Invoice Date*</div>
<div class="t fl m" style="left:1292px;top:974px">Due Date</div>
<div class="box" style="left:848px;top:987px;width:420px;height:44px"></div>
<div class="box" style="left:1292px;top:987px;width:420px;height:44px;border-color:#93c5fd"></div>
<div class="t val" style="left:863px;top:1010.5px;font-size:16px;letter-spacing:.5px">2019-11-02</div>
<div class="t val" style="left:1306.5px;top:1010.5px;font-size:16px;letter-spacing:.5px">2019-02-26</div>
<svg class="i" style="left:1209px;top:1002px;color:#22c55e;stroke-width:2" width="14" height="14" viewBox="0 0 24 24"><path d="M4.5 12.75l6 6 9-13.5"/></svg>
<svg style="left:1239px;top:1002px" width="13" height="14" viewBox="0 0 13 14" fill="none"><rect x=".75" y="2.5" width="11.5" height="10.75" rx="1" stroke="#111" stroke-width="1.5"/><rect x=".75" y="2.5" width="11.5" height="3" fill="#111"/><path d="M3.5 0v3M9.5 0v3" stroke="#111" stroke-width="1.5"/></svg>
<svg style="left:1683px;top:1002px" width="13" height="14" viewBox="0 0 13 14" fill="none"><rect x=".75" y="2.5" width="11.5" height="10.75" rx="1" stroke="#111" stroke-width="1.5"/><rect x=".75" y="2.5" width="11.5" height="3" fill="#111"/><path d="M3.5 0v3M9.5 0v3" stroke="#111" stroke-width="1.5"/></svg>

<div class="t fl m" style="left:848.5px;top:1066px">Currency</div>
<div class="t fl m" style="left:1292px;top:1066px">Payment Account</div>
<div class="box" style="left:848px;top:1079px;width:420px;height:60px;border-color:#d1d5db"></div>
<div class="box" style="left:1292px;top:1079px;width:420px;height:60px;border-color:#d1d5db"></div>
<div class="t val" style="left:865.5px;top:1102px;font-size:15.4px">CAD - Canadian Dollar</div>
<div class="t val" style="left:1309.5px;top:1102px;font-size:15.4px">Accounts Payable (2000)</div>
<svg class="i" style="left:1253px;top:1094px;color:#111;stroke-width:3.5" width="10" height="10" viewBox="0 0 24 24"><path d="M3 7l9 10 9-10"/></svg>
<svg class="i" style="left:1697px;top:1094px;color:#111;stroke-width:3.5" width="10" height="10" viewBox="0 0 24 24"><path d="M3 7l9 10 9-10"/></svg>

<!-- Bottom cover + scrollbar -->
<div class="a" style="left:796px;top:1119px;width:1012px;height:33px;background:#f9fafb"></div>
<div class="a" style="left:796px;top:1118px;width:978px;height:1px;background:#e8e9ea"></div>
<div class="a" style="left:1763px;top:185px;width:9px;height:322px;background:#8a8a8a;border-radius:4.5px"></div>
<svg style="left:1762px;top:171px" width="11" height="9"><polygon points="5.5,1 10.5,8 .5,8" fill="#8a8a8a"/></svg>
<svg style="left:1762px;top:1108px" width="11" height="9"><polygon points="5.5,8 10.5,1 .5,1" fill="#8a8a8a"/></svg>

<!-- Window edges -->
<div class="a" style="left:0;top:1150px;width:1808px;height:2px;background:#333"></div>
<div class="a" style="left:0;top:0;width:1px;height:1152px;background:#8d8d8d"></div>
<div class="a" style="left:1807px;top:0;width:1px;height:1152px;background:#555"></div>
</body></html>
